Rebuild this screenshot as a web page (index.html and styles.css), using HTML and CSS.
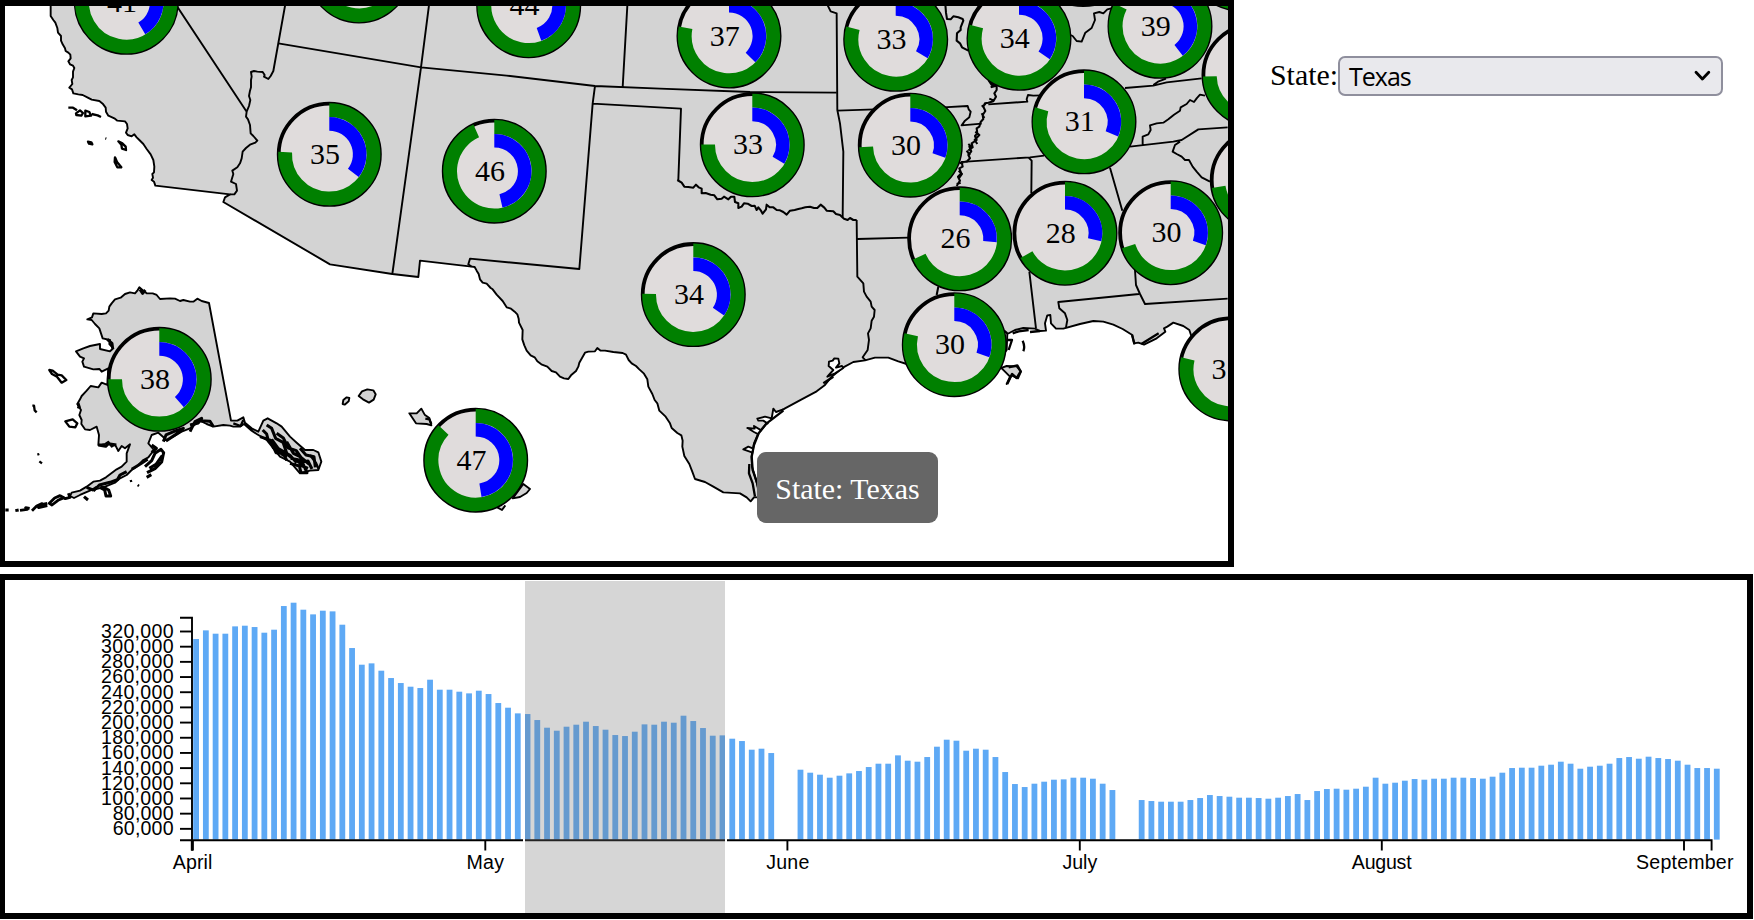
FILE: index.html
```html
<!DOCTYPE html>
<html lang="en">
<head>
<meta charset="utf-8">
<title>State map and timeline</title>
<link rel="stylesheet" href="styles.css">
</head>
<body>
<div class="top-row">
  <div class="map-panel">
    <svg class="map" width="1223" height="555" viewBox="5 6 1223 555">
      <g class="states" transform="scale(.33333)">
        <!-- mainland -->
        <path class="land" d="M152,-20L152,48 160,60 166,68 172,84 174,98 183,108 183,122 188,133 195,145 197,153 205,158 211,164 212,175 205,184 210,193 219,197 223,204 219,215 219,232 215,240 217,252 208,263 216,268 220,280 235,283 248,285 262,292 275,299 298,303 308,311 317,323 318,335 325,347 343,355 352,362 375,364 381,372 383,385 378,398 383,405 395,409 403,403 410,412 418,420 430,432 440,447 452,463 460,480 463,500 462,517 457,522 459,533 455,540 462,545 466,557 690,583 675,592 670,606 990,793 1177,822 1255,831 1260,782 1415,800 1424,801 1430,812 1436,822 1440,838 1448,848 1460,851 1472,864 1478,868L1490,884 1508,903 1520,922 1533,926 1544,935 1552,943 1556,956 1557,968 1568,990 1567,1018 1573,1036 1580,1052 1592,1066 1604,1072 1612,1084 1624,1093 1642,1100 1655,1113 1668,1117 1680,1130 1692,1135 1705,1137 1713,1126 1728,1113 1735,1100 1738,1088 1755,1058 1765,1055 1785,1054 1792,1044 1802,1052 1815,1052 1840,1056 1868,1059 1878,1064 1886,1080 1895,1090 1908,1098 1918,1108 1932,1121 1942,1138 1945,1160 1957,1182 1964,1200 1972,1210 1978,1232 1997,1250 2010,1270 2015,1284 2032,1299 2044,1306 2048,1322 2047,1340 2053,1368 2068,1392 2078,1418 2085,1437 2115,1446 2140,1460 2170,1477 2220,1480 2240,1492 2252,1504 2262,1492 2278,1492 2274,1462 2262,1420 2256,1400 2255,1370 2262,1330 2275,1300 2300,1270 2330,1240 2355,1225 2405,1198 2450,1174 2475,1155 2495,1130 2530,1102 2560,1086 2595,1081 2625,1073 2665,1073 2695,1084 2720,1092 2860,1130 3000,1105 3020,1098 3050,1099 3063,1115 3054,1135 3035,1126 3020,1152 3030,1130 3012,1112 2990,1090 3020,1050 3022,1002 3045,990 3070,984 3105,986 3120,993 3138,992 3135,970 3142,946 3151,945 3153,970 3168,986 3190,986 3240,972 3280,963 3310,965 3340,974 3368,987 3397,1005 3402,1030 3415,1028 3432,1034 3470,1015 3496,995 3492,985 3502,980 3520,968 3550,978 3568,990 3574,1008 3760,1110 3800,-20Z"/>
        <!-- state borders -->
        <path class="edge" d="M500,-28L740,335 747,318 751,300 747,288 750,272 753,262 753,240 755,230 753,216 762,213 772,215 788,216 794,225 792,230 805,237 812,228 820,213 860,-10M740,335L738,350 744,358 750,375 752,400 760,408 772,422 766,428 750,434 738,444 728,455 725,475 720,490 712,502 697,512 700,522 693,545 708,552 711,572 703,583 690,583"/>
        <path class="edge" d="M835,130L1263,202 1520,227 1785,258 1980,266 2250,276 2510,278M1289,0L1263,202 1177,822M1883,0L1868,262M1785,258L1778,311 1738,807 1410,776 1405,793 1415,800M1778,311L2043,326 2035,540"/>
        <path class="edge rough" d="M2032,540L2045,548 2053,560 2065,561 2080,563 2088,554 2096,562 2105,566 2105,580 2117,579 2132,584 2143,586 2152,598 2165,596 2172,590 2185,598 2193,590 2203,590 2205,606 2215,610 2215,624 2225,620 2232,610 2243,611 2255,618 2264,617 2270,630 2275,622 2283,632 2288,641 2298,628 2300,614 2309,622 2320,622 2330,630 2340,631 2350,636 2360,644 2370,632 2384,630 2395,627 2405,625 2416,622 2430,620 2442,624 2452,624 2462,614 2473,623 2480,632 2500,634 2508,642 2520,645 2532,656 2543,660 2550,654 2560,660 2570,660"/>
        <path class="edge" d="M2480,10L2492,34 2510,40 2512,330 2520,370 2530,455 2528,652M2512,332L2625,328M2830,322L2903,318 2906,328 2912,335 2908,352 2895,362 2885,376 2945,371M2570,660L2572,830 2590,850 2592,875 2600,890 2612,905 2615,920 2624,930 2622,950 2615,962 2612,985 2604,1000 2607,1020 2603,1050 2588,1072 2597,1081M2572,717L2725,713"/>
        <path class="edge rough" d="M2835,0L2838,38 2841,57 2852,58 2860,49 2875,52 2888,57 2890,62 2882,82 2882,90 2871,100 2870,122 2880,130 2886,142 2905,152M2965,240L2975,255 2990,257 2990,270 2983,280 2988,290 2980,304 2965,308 2955,310 2950,320 2956,333 2948,345 2950,357 2942,366 2938,380 2930,385 2932,400 2925,408 2930,420 2915,430 2918,442 2908,440 2914,454 2905,465 2910,475 2900,485 2885,486 2888,500 2878,505 2884,520 2874,530 2880,542 2870,558M2962,235l20,20M2972,262l14,-4M2968,296l14,6M2945,320l12,-8M2945,340l8,14M2926,395l12,10-14,15 8,12M2905,432l12,10-12,10M2900,452l10,14M2878,490l24,-6M2876,512l10,10-10,14M2870,552l12,-4M2815,860l-5,25"/>
        <path class="edge" d="M2965,313L3082,305 3080,298 3084,285 3100,287 3125,286M3375,264L3460,257 3500,247 3605,235M3460,255l14,-10 24,-9M3200,100L3218,108 3230,123 3245,125 3256,98 3275,84 3285,60 3282,40 3298,36 3310,40 3322,28 3345,22M2900,485L3090,472 3132,467M3390,440L3520,425 3545,420 3595,388 3683,382M3428,438L3428,410 3445,403 3452,390 3450,376 3470,370 3490,368 3505,358 3522,344 3540,332 3542,322 3560,312 3570,300 3582,306 3590,295 3600,284 3615,287M3540,425L3525,435 3518,455 3530,462 3545,470 3555,480 3567,480 3578,500 3590,515 3605,532 3630,545M3085,472L3095,482 3094,580M3330,503L3367,632M3405,810L3408,855 3420,882 3435,912 3683,896M3417,882L3175,906 3178,925 3195,940 3202,960 3198,982M3088,815L3108,985"/>
        <!-- gulf details -->
        <path class="water" d="M2482,1130L2500,1110 2486,1098 2487,1085 2498,1082 2503,1075 2515,1076 2518,1090 2508,1103 2526,1098 2530,1104 2505,1120Z"/>
        <path class="water" d="M2305,1272L2290,1262 2275,1262 2272,1256 2295,1250 2315,1255 2320,1226 2328,1236 2350,1228M2277,1304L2262,1296 2242,1284 2264,1286 2262,1278 2285,1292M2258,1358L2230,1348 2245,1340 2258,1345"/>
        <path class="edge heavy" d="M2278,1490L2272,1450 2258,1410 2255,1370 2262,1335 2276,1300 2300,1270 2350,1232M2248,1392L2247,1420 2258,1450 2265,1490M2470,1150L2500,1130M3022,1000l-10,-8M3024,1020l12,0-10,30M3068,1022q8,18 2,32M3026,1102l26,-6 10,18-12,20-14,-12-14,30M3038,1000l18,-6 30,-4M3090,996l30,-3M3396,1005l8,28M3424,1032l52,-32"/>
        <!-- channel islands -->
        <path class="edge heavy" d="M205,323l14,0 12,8M228,340l12,-9 9,8-5,8-15,-2ZM256,332l12,4 5,11-17,2ZM275,342l18,4 10,5M264,425l10,2 3,6-10,-2ZM316,415l3,1M355,424l12,6 10,10 1,10-12,-4-2,-12ZM345,472l6,14 13,16-12,0-8,-16Z"/>
        <!-- alaska -->
        <path class="land" d="M418,862L412,872 405,880 390,877 375,882 362,893 345,898 335,910 328,920 326,932 318,940 305,942 280,940 276,952 262,958 275,960 285,972 298,985 303,1000 308,1015 330,1020 328,1032 340,1045 330,1054 300,1047 300,1032 270,1038 250,1045 228,1054 240,1070 252,1075 247,1085 252,1100 280,1108 298,1107 305,1115 325,1105 322,1155 305,1148 295,1162 272,1158 260,1172 245,1188 240,1198 232,1212 243,1230 238,1245 245,1260 244,1272 255,1288 270,1290 290,1280 297,1305 295,1335 315,1332 325,1325 335,1340 345,1334 355,1353 365,1338 375,1345 390,1333 380,1360 380,1385 365,1400 350,1408 318,1432 300,1442 280,1445 260,1460 240,1472 215,1478 210,1488 222,1494 240,1485 275,1470 310,1462 345,1448 360,1435 380,1425 395,1410 410,1400 430,1380 445,1372 462,1350 445,1330 455,1305 475,1298 500,1320 520,1310 545,1295 570,1285 600,1262 620,1272 640,1280 670,1275 690,1277 700,1280 720,1280 732,1272 755,1292 770,1302 800,1320 840,1370 870,1385 900,1420 930,1412 955,1410 964,1385 955,1357 940,1350 915,1350 890,1328 870,1310 845,1280 830,1270 803,1255 790,1262 775,1295 755,1285 735,1268 730,1252 712,1262 693,1262 627,909 605,903 592,896 580,905 570,905 550,900 540,903 525,896 510,895 480,897 470,885 458,880 440,880 430,872Z"/>
        <path class="edge rugged" d="M420,868l8,12 8,-10M322,1018l14,12 2,16M234,1210l4,12-6,-2M640,1280l-10,-16-28,-2M570,1295l15,-30 20,-10-10,14-25,6M490,1325l8,-20 28,-12 24,-8-22,18-30,20M455,1335l14,10-14,12M295,1335l22,4 8,-8 24,4M788,1290l12,12 5,20 20,18 20,22 15,10M800,1275l15,10 12,30 22,12 12,35 15,12M780,1310l35,12 5,22 30,15 10,22M815,1318l20,28 35,20 20,22M830,1300l20,14 15,30 24,8 14,20 24,20M860,1325l20,35 20,10 12,28M870,1390l28,8 5,20 18,0-10,-22-28,-18M890,1355l20,30 14,-2 12,24M900,1345l18,20 24,5 4,32M820,1340l8,18 12,2M872,1375l22,4 10,18 20,8M435,1400l20,-18 10,-22 18,-12 8,10-6,28-20,20-24,12M448,1405l20,-12 18,-25M440,1432l14,-8M300,1462l14,8 4,18 14,0-6,-18-22,-12M260,1462l18,8 12,-8M380,1415l-20,10-8,14-22,8-32,8-18,18M252,1490l12,10M395,1408l20,-12 28,-18"/>
        <path class="edge heavy" d="M700,1270l22,8 8,-18M148,1110l10,2 15,12 12,2 14,14-14,8-14,-18-15,-8ZM97,1217l5,0 2,14 6,6M196,1264l22,-6 14,12-6,12-18,-2ZM112,1364l6,-2M118,1384l8,6M930,1365l18,24 8,18M392,1440l2,6M413,1455l4,3"/>
        <path class="edge heavy dash" d="M16,1530l10,0M46,1532l10,-2M60,1531l22,-3-5,-5 12,2M96,1532l14,-14 16,-7-10,12 26,-6M124,1514l18,-4M148,1510l16,-16 16,-7 12,6-18,8-18,14ZM182,1488l14,8 14,-4-5,-12"/>
        <!-- hawaii -->
        <path class="land" d="M1028,1212l2,-12 10,-8 8,2-2,10-12,10ZM1076,1188l10,-14 16,-6 18,3 7,12-6,16-14,9-18,-10ZM1228,1240l22,0 14,-14 10,18 14,10 6,22-14,-4-32,-2ZM1570,1452l20,15-10,12-20,12-22,4ZM1492,1522l14,8 10,-14"/>
        <path class="edge heavy" d="M1276,1256l12,2 6,14"/>
      </g>
      <g id="donuts"></g>
    </svg>
    <div class="tooltip">State: Texas</div>
  </div>
  <div class="controls">
    <label class="control-label" for="state">State:</label>
    <div class="select" id="state">
      <span class="select-value">Texas</span>
      <svg class="chevron" width="17" height="12" viewBox="0 0 17 12"><path d="M2 2.2 8.4 9 14.8 2.2"/></svg>
    </div>
  </div>
</div>
<div class="chart-panel">
  <svg id="chart" class="chart" width="1742" height="333" viewBox="5 580 1742 333"></svg>
</div>
<script src="script.js"></script>
</body>
</html>
```
FILE: styles.css
```css
body {
  margin: 0;
  background: #fff;
  color: #000;
  font-family: "Liberation Serif", "Times New Roman", serif;
  font-size: 29.9px;
  overflow: hidden;
}

.top-row {
  display: flex;
  height: 567px;
  margin-bottom: 7px;
}

.map-panel {
  position: relative;
  box-sizing: border-box;
  flex: none;
  width: 1234px;
  border: 6px solid #000;
  border-left-width: 5px;
}

.map,
.chart {
  display: block;
}

.land {
  fill: #d3d3d3;
}

.land,
.edge,
.water {
  stroke: #000;
  stroke-width: 5.7;
  stroke-linejoin: round;
}

.edge {
  fill: none;
}

.water {
  fill: #fff;
}

.rough {
  stroke-width: 6.2;
}

.heavy {
  stroke-width: 7;
}

.rugged {
  stroke-width: 9;
}

.dash {
  stroke-width: 8.5;
}

.disc {
  fill: #e0dcdc;
  stroke: #000;
  stroke-width: 3.8;
}

.ring-outer {
  fill: none;
  stroke: #008000;
  stroke-width: 13.8;
}

.ring-inner {
  fill: none;
  stroke: #00f;
  stroke-width: 13.6;
}

.donut-label {
  font-size: 30px;
  text-anchor: middle;
}

.tooltip {
  position: absolute;
  left: 752px;
  top: 446px;
  box-sizing: border-box;
  width: 181px;
  height: 71px;
  padding-top: 4px;
  border-radius: 9px;
  background: #666;
  color: #fff;
  line-height: 66px;
  text-align: center;
  white-space: nowrap;
}

.controls {
  display: flex;
  align-items: center;
  height: 40px;
  margin: 56px 0 0 36px;
}

.control-label {
  width: 68px;
  padding-bottom: 2px;
}

.select {
  box-sizing: border-box;
  display: flex;
  align-items: center;
  justify-content: space-between;
  width: 385px;
  height: 40px;
  padding: 0 10px 0 9px;
  border: 2px solid #8f8f9d;
  border-radius: 7px;
  background: #e9e9ed;
  font-family: "Open Sans", sans-serif;
  font-size: 25px;
  letter-spacing: -1px;
}

.select-value {
  padding-bottom: 1px;
}

.chevron {
  fill: none;
  stroke: #000;
  stroke-width: 2.8;
  stroke-linecap: round;
  stroke-linejoin: round;
}

.chart-panel {
  box-sizing: border-box;
  width: 1753px;
  height: 345px;
  border: 6px solid #000;
  border-left-width: 5px;
}

.bar {
  fill: #5ea9f5;
}

.axis {
  fill: none;
  stroke: #000;
  stroke-width: 1.9;
}

.axis-start {
  stroke-width: 3;
}

.axis-label {
  font-family: "Liberation Sans", Arial, sans-serif;
  font-size: 19.6px;
}

.brush {
  fill: #777;
  fill-opacity: .3;
}

.brush-edge {
  stroke: #fff;
  stroke-width: 2;
}
```
FILE: script.js
```js
const NS = 'http://www.w3.org/2000/svg';

function add(parent, tag, attrs, text) {
  const el = document.createElementNS(NS, tag);
  for (const key in attrs) el.setAttribute(key, attrs[key]);
  if (text !== undefined) el.textContent = text;
  parent.appendChild(el);
  return el;
}

// Arc starting at twelve o'clock, clockwise, covering pct percent.
function arc(cx, cy, r, pct) {
  const a = pct / 100 * 2 * Math.PI;
  const x = cx + r * Math.sin(a);
  const y = cy - r * Math.cos(a);
  return `M${cx},${cy - r}A${r},${r} 0 ${pct > 50 ? 1 : 0} 1 ${x},${y}`;
}

// cx, cy, inner percentage, outer percentage
const donuts = [
  [1083.3, -45.4, 33, 78], [1240, -41, 36, 80], [359, -29, 40, 80],
  [126.3, 2.3, 41, 80], [528.7, 5.7, 44, 80], [729, 36, 37, 78],
  [895.7, 39.3, 33, 79], [1019, 38.3, 34, 79.3], [1160, 26.3, 39, 82.4],
  [1254, 75, 33, 74.5], [1262.3, 180, 30, 72.5],
  [752.3, 144.8, 33, 75.1], [494.3, 171.2, 46, 93.3], [329.3, 154.3, 35, 75.8],
  [910.3, 145.2, 30, 74.4], [1084, 121.8, 31, 79.6],
  [1065, 233.2, 28, 66.9], [1170.7, 232.7, 30, 70.1], [954.3, 344.7, 30, 78.6],
  [959.7, 238.8, 26, 68.4], [1230.8, 369, 31, 78.7], [693.3, 294.6, 34, 75.3],
  [159.3, 379.3, 38, 75], [475.7, 460.2, 47, 87]
];

const donutLayer = document.getElementById('donuts');
donuts.forEach(([cx, cy, inner, outer]) => {
  add(donutLayer, 'circle', { class: 'disc', cx, cy, r: 50.6 });
  add(donutLayer, 'path', { class: 'ring-outer', d: arc(cx, cy, 44.2, outer) });
  add(donutLayer, 'path', { class: 'ring-inner', d: arc(cx, cy, 30.4, inner + 0.5) });
  if (cy > -20 && cx < 1240) {
    add(donutLayer, 'text', { class: 'donut-label', x: cx - 4.2, y: cy + 9.6 }, inner);
  }
});

// Bar tops in thirds of a pixel below y = 560; null marks a day without data.
const tops = [
  238, 212, 222, 222, 200, 198, 202, 219, 210, 139, 129, 150, 164, 153, 155, 195,
  265, 315, 311, 333, 355, 370, 381, 385, 360, 390, 390, 396, 401, 393, 403, 430,
  444, 461, 463, 481, 504, 513, 501, 495, 486, 499, 510, 526, 529, 516, 494, 495,
  486, 489, 468, 484, 505, 528, 527, 537, 544, 570, 567, 580, null, null, 630, 639,
  645, 654, 648, 641, 634, 622, 612, 612, 587, 603, 606, 592, 561, 540, 543, 573,
  567, 570, 592, 637, 673, 682, 672, 666, 660, 659, 654, 654, 657, 672, 691, null,
  null, 721, 724, 726, 726, 726, 721, 715, 706, 709, 711, 714, 714, 715, 717, 714,
  709, 703, 721, 694, 688, 687, 690, 687, 681, 654, 672, 669, 663, 658, 660, 657,
  657, 654, 654, 655, 657, 651, 639, 625, 624, 624, 618, 615, 606, 612, 627, 621,
  618, 612, 595, 592, 597, 591, 595, 598, 603, 615, 625, 625, 627
];

const chart = document.getElementById('chart');
const baseline = 839.6;
tops.forEach((top, i) => {
  if (top === null) return;
  const y = 559.7 + top / 3;
  add(chart, 'rect', { class: 'bar', x: 193.2 + i * 9.748, y, width: 5.8, height: baseline - y });
});

add(chart, 'path', { class: 'axis', d: 'M180,617.8H192V840.2H180' });
add(chart, 'path', { class: 'axis', d: 'M192,850.5V840.2H1711.6V850.5' });
add(chart, 'path', { class: 'axis axis-start', d: 'M192.3,841V850.5' });

for (let i = 0; i < 14; i++) {
  const y = 631.5 + i * 15.18;
  const value = 320000 - i * 20000;
  add(chart, 'path', { class: 'axis', d: `M180,${y}H192` });
  add(chart, 'text', {
    class: 'axis-label', x: value < 100000 ? 112.8 : 101, y: y + 6.4,
    textLength: value < 100000 ? 60.8 : 72.6, lengthAdjust: 'spacing'
  }, value.toLocaleString('en-US'));
}

[
  ['April', 192.4, 172.8, 39.5], ['May', 485.3, 466.5, 37.5], ['June', 787.4, 766.3, 43],
  ['July', 1079.8, 1062.4, 34.8], ['August', 1381.8, 1351.8, 59.8],
  ['September', 1684, 1636, 97.5]
].forEach(([name, tick, x, textLength]) => {
  add(chart, 'path', { class: 'axis', d: `M${tick},841V850.5` });
  add(chart, 'text', { class: 'axis-label', x, y: 869, textLength, lengthAdjust: 'spacing' }, name);
});

add(chart, 'rect', { class: 'brush', x: 525, y: 581, width: 200, height: 332 });
add(chart, 'path', { class: 'brush-edge', d: 'M524,581V913M726,581V913' });
```
